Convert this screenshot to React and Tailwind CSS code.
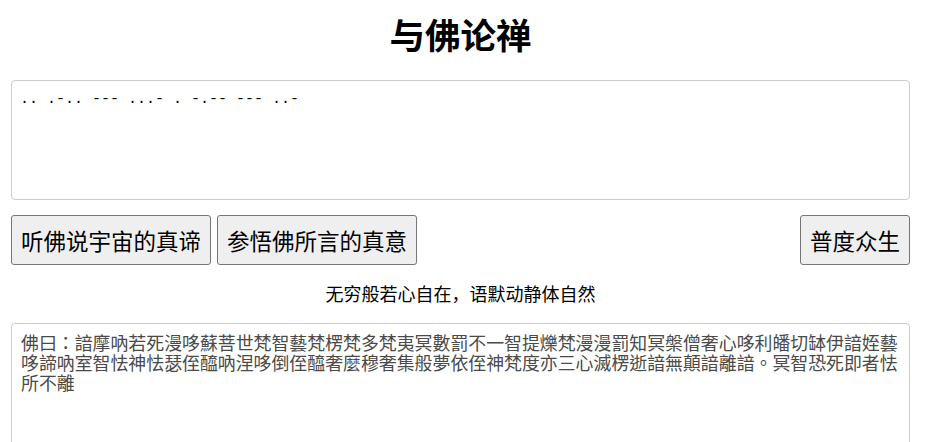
import { useState } from 'react';

const cjk = '"Noto Sans CJK SC", "Noto Sans", sans-serif';

export default function App() {
  const [plain, setPlain] = useState('.. .-.. --- ...- . -.-- --- ..-');
  const [cipher, setCipher] = useState(
    '佛曰：諳摩吶若死漫哆蘇菩世梵智藝梵楞梵多梵夷冥數罰不一智提爍梵漫漫罰知冥槃僧奢心哆利皤切缽伊諳姪藝哆諦吶室智怯神怯瑟侄醯吶涅哆倒侄醯奢麼穆奢集般夢依侄神梵度亦三心滅楞逝諳無顛諳離諳。冥智恐死即者怯所不離'
  );

  const btn =
    'h-[50px] rounded-[3px] border border-[#767676] bg-[#efefef] px-[9px] text-[22.5px] leading-none text-black';

  return (
    <div className="min-h-screen bg-white pl-[11px] pr-[16px] text-black" style={{ fontFamily: cjk }}>
      <h1 className="pt-[14px] text-center text-[35.5px] font-bold leading-[40px]">与佛论禅</h1>

      <textarea
        value={plain}
        onChange={(e) => setPlain(e.target.value)}
        className="mt-[26px] block h-[120px] w-full resize-none rounded-[4px] border border-[#cccccc] px-[8px] py-[8px] text-[15px] text-black outline-none"
        style={{ fontFamily: '"Liberation Mono", "DejaVu Sans Mono", monospace' }}
      />

      <div className="mt-[15px] flex items-center justify-between">
        <div className="flex gap-[6px]">
          <button className={btn}>听佛说宇宙的真谛</button>
          <button className={btn}>参悟佛所言的真意</button>
        </div>
        <button className={btn}>普度众生</button>
      </div>

      <p className="mt-[16px] text-center text-[18px] leading-[24px]">无穷般若心自在，语默动静体自然</p>

      <textarea
        value={cipher}
        onChange={(e) => setCipher(e.target.value)}
        className="mt-[18px] block h-[160px] w-full resize-none rounded-[4px] border border-[#cccccc] px-[9px] pt-[8px] text-[17.9px] leading-[20px] text-[#4a4a4a] outline-none"
        style={{ fontFamily: '"Noto Sans CJK TC", "Noto Sans CJK SC", serif' }}
      />
    </div>
  );
}
